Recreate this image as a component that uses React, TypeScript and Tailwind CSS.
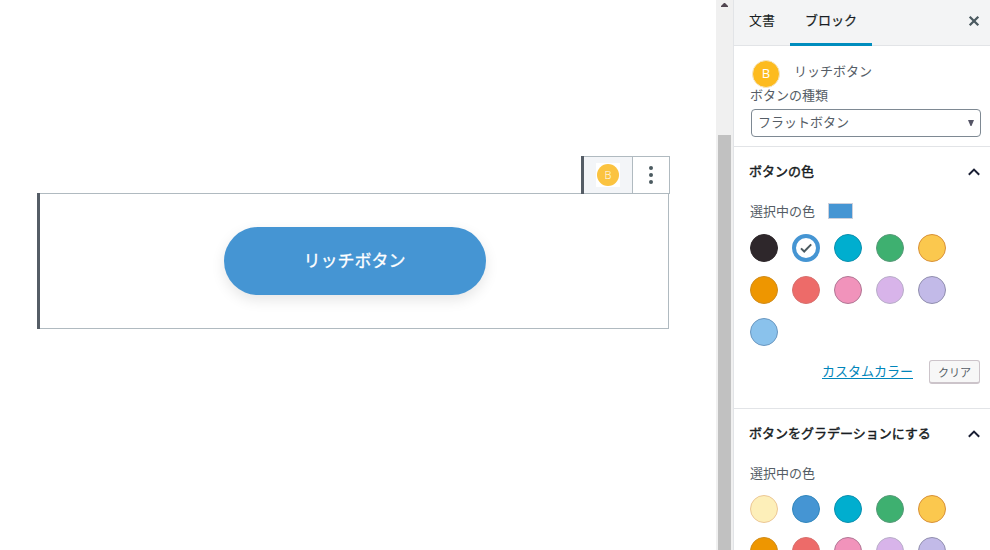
import React from 'react';

interface Swatch {
  fill: string;
  ring: string;
  selected?: boolean;
}

const BASE_COLORS: Swatch[] = [
  { fill: 'bg-[#00aecf]', ring: 'border-[#0b8fae]' },
  { fill: 'bg-[#3eb070]', ring: 'border-[#579a78]' },
  { fill: 'bg-[#fbc84e]', ring: 'border-[#d99138]' },
  { fill: 'bg-[#ee9600]', ring: 'border-[#d08c1c]' },
  { fill: 'bg-[#ed6b69]', ring: 'border-[#d8706e]' },
  { fill: 'bg-[#f193bb]', ring: 'border-[#b17795]' },
  { fill: 'bg-[#d8b4ea]', ring: 'border-[#b8aec8]' },
  { fill: 'bg-[#c2bae8]', ring: 'border-[#918fae]' },
  { fill: 'bg-[#8ac2ec]', ring: 'border-[#6a97c0]' },
];

const BUTTON_COLORS: Swatch[] = [
  { fill: 'bg-[#2e272b]', ring: 'border-[#2e272b]' },
  { fill: 'bg-white', ring: 'border-[#4595d3]', selected: true },
  ...BASE_COLORS,
];

const GRADIENT_COLORS: Swatch[] = [
  { fill: 'bg-[#fdefb9]', ring: 'border-[#ecc796]' },
  { fill: 'bg-[#4595d3]', ring: 'border-[#3187bd]' },
  ...BASE_COLORS,
];

const ColorPalette: React.FC<{ colors: Swatch[] }> = ({ colors }) => (
  <div className="flex w-[210px] flex-wrap gap-[14px]">
    {colors.map((c, i) => (
      <button
        key={i}
        className={`flex size-7 items-center justify-center rounded-full ${c.selected ? 'border-4' : 'border'} ${c.fill} ${c.ring}`}
      >
        {c.selected && (
          <svg className="size-5 shrink-0" viewBox="0 0 20 20" fill="none" stroke="#4b5a60" strokeWidth="2">
            <path d="M5 10.4l3.2 3.1 7-7.1" />
          </svg>
        )}
      </button>
    ))}
  </div>
);

const PanelTitle: React.FC<{ title: string }> = ({ title }) => (
  <div className="flex h-[49px] items-center justify-between pr-[10px] pl-[15px]">
    <h2 className="pb-[2px] text-[13px] font-normal text-[#191e23] [-webkit-text-stroke:0.45px_#191e23]">{title}</h2>
    <svg className="h-3 w-3" viewBox="0 0 12 12" fill="none" stroke="#191e33" strokeWidth="2">
      <path d="M0.8 8.7L6 3.6l5.2 5.1" />
    </svg>
  </div>
);

const Editor: React.FC = () => (
  <main className="flex w-[716px] flex-col pt-[156px] pl-[37px]">
    <div className="z-10 -mb-px ml-[544px] flex h-[38px] w-[89px] border border-l-0 border-[#b0bac0]">
      <div className="-my-px w-[3px] bg-[#555d66]" />
      <button className="flex w-[49px] items-center justify-center border-r border-[#b0bac0] bg-[#f3f5f8]">
        <span className="flex size-6 items-center justify-center bg-white">
          <span className="flex size-[22px] items-center justify-center rounded-full bg-[#fbc340] font-['Open_Sans',sans-serif] text-[11px] font-light text-white">B</span>
        </span>
      </button>
      <button className="flex flex-1 flex-col items-center justify-center gap-[3px]">
        <span className="size-1 rounded-full bg-[#4b5a60]" />
        <span className="size-1 rounded-full bg-[#4b5a60]" />
        <span className="size-1 rounded-full bg-[#4b5a60]" />
      </button>
    </div>
    <div className="flex h-[136px] w-[632px] border border-l-0 border-[#b0bac0]">
      <div className="-my-px w-[3px] bg-[#555d66]" />
      <div className="flex flex-1 items-center justify-center pl-px">
        <button className="h-[68px] w-[262px] rounded-full bg-[#4595d3] pb-[3px] text-[17px] text-white shadow-[0_5px_14px_rgba(0,0,0,0.1)] [-webkit-text-stroke:0.3px_#fff]">
          リッチボタン
        </button>
      </div>
    </div>
  </main>
);

const Scrollbar: React.FC = () => (
  <div className="flex w-[17px] flex-col items-center bg-[#f0f0f0]">
    <div className="flex h-[135px] pt-[3px]">
      <svg className="h-1 w-[7px]" viewBox="0 0 7 4" fill="#50454f">
        <path d="M3 0h1l3 3v1H0V3z" />
      </svg>
    </div>
    <div className="w-[13px] flex-1 bg-[#c1c1c1]" />
  </div>
);

const Sidebar: React.FC = () => (
  <aside className="h-[550px] flex-1 overflow-hidden border-l border-[#e2e4e7] bg-white">
    <header className="flex h-[46px] border-b border-[#e2e4e7] bg-[#f3f4f5] text-[13px] text-[#191e23]">
      <button className="w-14 pb-[5px]">文書</button>
      <button className="-mb-px w-[82px] border-b-[3px] border-[#008dbe] pb-1 [-webkit-text-stroke:0.25px_#191e23]">ブロック</button>
      <button className="mr-[10px] ml-auto flex items-center pb-[3px]">
        <svg className="size-3" viewBox="0 0 12 12" fill="none" stroke="#4b5a60" strokeWidth="2.3">
          <path d="M1.7 1.7l8.6 8.6M10.3 1.7l-8.6 8.6" />
        </svg>
      </button>
    </header>

    <section className="h-[101px] border-b border-[#e2e4e7] pt-[14px] pr-[9px] pl-4">
      <div className="flex h-7">
        <span className="ml-[2px] flex size-7 items-center justify-center rounded-full border border-[#f5e6c4] bg-[#fdbb1e] font-['Open_Sans',sans-serif] text-[13px] text-white">B</span>
        <span className="ml-[14px] text-[13px] leading-[21px]">リッチボタン</span>
      </div>
      <label className="block h-[21px] text-[13px] leading-[14px]">ボタンの種類</label>
      <button className="ml-px flex h-7 w-[230px] items-center justify-between rounded-[4px] border border-[#7e8993] pr-[6px] pl-[6px] text-[13px]">
        <span className="pb-[3px]">フラットボタン</span>
        <svg className="h-[6px] w-[6px]" viewBox="0 0 6 6" fill="#555566">
          <path d="M0 0h6L3.5 6h-1z" />
        </svg>
      </button>
    </section>

    <section className="h-[262px] border-b border-[#e2e4e7]">
      <PanelTitle title="ボタンの色" />
      <div className="px-4 pt-[7px]">
        <div className="flex h-8 items-start">
          <span className="text-[13px] leading-4">選択中の色</span>
          <span className="ml-[13px] h-4 w-[25px] border border-[#ccd0dc] bg-[#4595d3]" />
        </div>
        <div className="-mt-px">
          <ColorPalette colors={BUTTON_COLORS} />
        </div>
      </div>
      <div className="flex items-start justify-end gap-4 pt-[14px] pr-[10px]">
        <a className="pt-px text-[13px] leading-5 text-[#0085ba] underline underline-offset-2">カスタムカラー</a>
        <button className="h-6 w-[51px] rounded-[3px] border border-b-2 border-[#ccc4ca] bg-[#f7f7f7] text-[11px] leading-5">クリア</button>
      </div>
    </section>

    <section>
      <PanelTitle title="ボタンをグラデーションにする" />
      <div className="px-4 pt-[7px]">
        <div className="h-[30px] text-[13px] leading-4">選択中の色</div>
        <ColorPalette colors={GRADIENT_COLORS} />
      </div>
    </section>
  </aside>
);

const App: React.FC = () => {
  return (
    <div className="flex h-[550px] w-[990px] overflow-hidden bg-white font-['Noto_Sans_CJK_JP',sans-serif] text-[#555d66]">
      <Editor />
      <Scrollbar />
      <Sidebar />
    </div>
  );
};

export default App;
